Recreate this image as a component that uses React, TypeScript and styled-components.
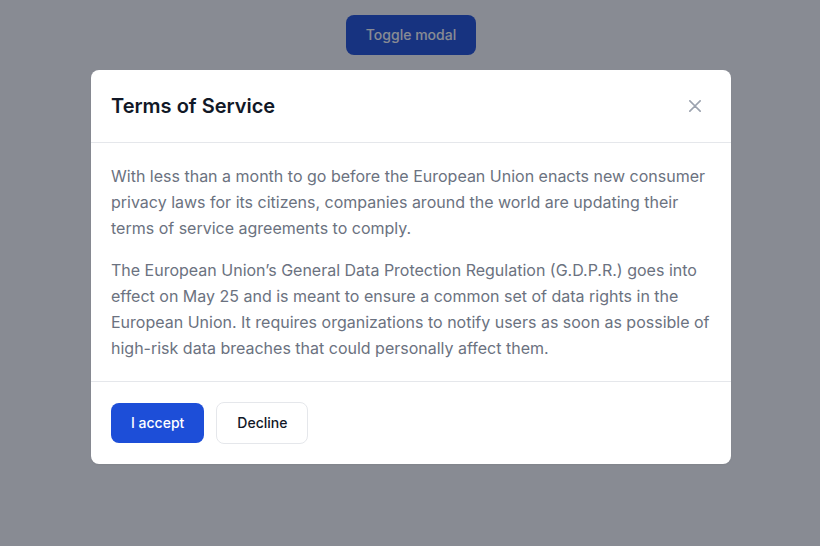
import React from "react";
import styled, { createGlobalStyle } from "styled-components";

const GlobalStyle = createGlobalStyle`
  html, body { margin: 0; padding: 0; background: #ffffff; }
  body { font-family: Inter, "Noto Sans", sans-serif; -webkit-font-smoothing: antialiased; }
  * { box-sizing: border-box; }
`;

const Page = styled.div`
  position: relative;
  width: 820px;
  height: 546px;
  overflow: hidden;
  display: flex;
  justify-content: center;
  align-items: flex-start;
  padding-top: 15px;
  padding-left: 2px;
`;

const Button = styled.button<{ $variant?: "primary" | "secondary" }>`
  font-family: Inter, "Noto Sans", sans-serif;
  font-size: 14px;
  line-height: 20px;
  font-weight: 500;
  padding: 10px 20px;
  border-radius: 8px;
  cursor: pointer;
  background: ${(p) => (p.$variant === "secondary" ? "#ffffff" : "#1d4ed8")};
  color: ${(p) => (p.$variant === "secondary" ? "#111827" : "#ffffff")};
  border: ${(p) => (p.$variant === "secondary" ? "1px solid #e5e7eb" : "none")};
`;

const Overlay = styled.div`
  position: absolute;
  inset: 0;
  background: rgba(17, 24, 39, 0.5);
  display: flex;
  justify-content: center;
  align-items: flex-start;
  padding-top: 70px;
  padding-left: 2px;
`;

const Modal = styled.div`
  width: 640px;
  background: #ffffff;
  border-radius: 8px;
  box-shadow: 0 1px 2px rgba(0, 0, 0, 0.05);
  overflow: hidden;
`;

const Header = styled.div`
  display: flex;
  align-items: center;
  justify-content: space-between;
  padding: 20px;
  border-bottom: 1px solid #e5e7eb;
`;

const Title = styled.h3`
  margin: 0;
  font-size: 20px;
  line-height: 28px;
  font-weight: 600;
  color: #111827;
`;

const CloseButton = styled.button`
  width: 32px;
  height: 32px;
  display: inline-flex;
  align-items: center;
  justify-content: center;
  background: transparent;
  border: none;
  border-radius: 8px;
  color: #9ca3af;
  cursor: pointer;
  padding: 0;
`;

const Body = styled.div`
  padding: 20px;
  display: flex;
  flex-direction: column;
  gap: 16px;
`;

const Paragraph = styled.p`
  margin: 0;
  font-size: 16px;
  line-height: 26px;
  color: #6b7280;
`;

const Footer = styled.div`
  display: flex;
  align-items: center;
  gap: 12px;
  padding: 20px;
  border-top: 1px solid #e5e7eb;
`;

export default function App() {
  return (
    <>
      <GlobalStyle />
      <Page>
        <Button>Toggle modal</Button>
        <Overlay>
          <Modal>
            <Header>
              <Title>Terms of Service</Title>
              <CloseButton aria-label="Close modal">
                <svg width="12" height="12" viewBox="0 0 14 14" fill="none">
                  <path
                    d="m1 1 6 6m0 0 6 6M7 7l6-6M7 7l-6 6"
                    stroke="currentColor"
                    strokeWidth="2"
                    strokeLinecap="round"
                    strokeLinejoin="round"
                  />
                </svg>
              </CloseButton>
            </Header>
            <Body>
              <Paragraph>
                With less than a month to go before the European Union enacts new consumer privacy laws for its
                citizens, companies around the world are updating their terms of service agreements to comply.
              </Paragraph>
              <Paragraph>
                The European Union’s General Data Protection Regulation (G.D.P.R.) goes into effect on May 25 and is
                meant to ensure a common set of data rights in the European Union. It requires organizations to
                notify users as soon as possible of high-risk data breaches that could personally affect them.
              </Paragraph>
            </Body>
            <Footer>
              <Button>I accept</Button>
              <Button $variant="secondary">Decline</Button>
            </Footer>
          </Modal>
        </Overlay>
      </Page>
    </>
  );
}
